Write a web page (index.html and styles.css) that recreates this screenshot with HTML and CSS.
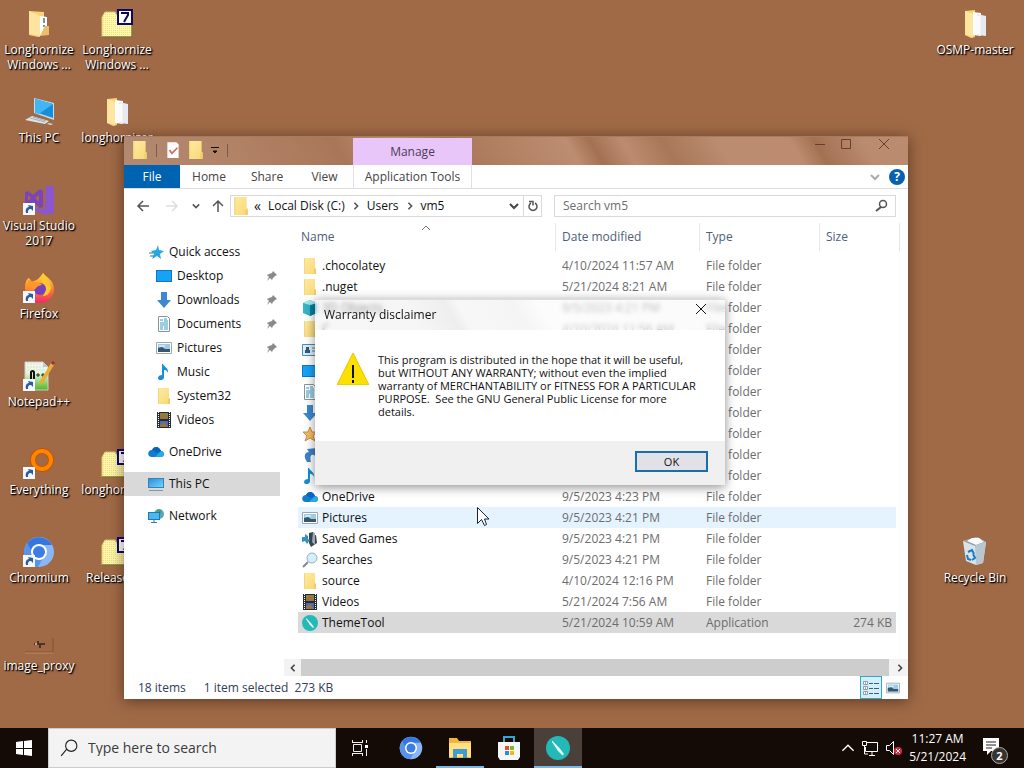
FILE: index.html
```html
<!DOCTYPE html>
<html lang="en">
<head>
<meta charset="utf-8">
<meta name="viewport" content="width=device-width, initial-scale=1">
<title>Desktop</title>
<link rel="stylesheet" href="styles.css">
</head>
<body>
<svg class="defs" aria-hidden="true">
  <defs>
    <linearGradient id="g-folder" x1="0" x2="1" y2="1"><stop offset="0" stop-color="#ffeaa0"/><stop offset="1" stop-color="#f7d873"/></linearGradient>
    <linearGradient id="g-blue" x1="0" x2="1" y2="1"><stop offset="0" stop-color="#2d8fdd"/><stop offset="1" stop-color="#6fd3ff"/></linearGradient>
    <linearGradient id="g-fire" x1="0" x2="0" y2="1"><stop offset="0" stop-color="#ffe040"/><stop offset=".5" stop-color="#ff8a2a"/><stop offset="1" stop-color="#f0286a"/></linearGradient>
    <linearGradient id="g-green" x1="0" x2="0" y2="1"><stop offset="0" stop-color="#f4fbef"/><stop offset=".4" stop-color="#e4f5d9"/><stop offset="1" stop-color="#4cb81f"/></linearGradient>
    <pattern id="p-zip" width="2" height="2" patternUnits="userSpaceOnUse"><rect width="2" height="2" fill="#fdf8ae"/><path d="M0 0h1v1H0z" fill="#efe07c"/></pattern>
  </defs>
  <symbol id="folder" viewBox="0 0 16 16"><path d="M2 0h11v10h1v6H2z" fill="url(#g-folder)"/><path d="M12 11h2v5h-2z" fill="#efcc66"/><path d="M2 0h1v16H2z" fill="#f2d681"/></symbol>
  <symbol id="open-folder" viewBox="0 0 32 32"><path d="M6 3l10-1v27l-4 1-6-3z" fill="#f7d375"/><path d="M14 4l8 1v23l-8-1z" fill="#fff"/><path d="M18 6l9 2v20l-9-1z" fill="#e7eaf3"/><path d="M6 3l8 3v24l-2-2-6-1z" fill="#ffe6a0"/><path d="M17 8v18M20 8v18" stroke="#fbfbfd" stroke-width="3"/></symbol>
  <symbol id="doc-folder" viewBox="0 0 32 32"><path d="M6 3l15 1v22l-6 3-9-2z" fill="#f7d375"/><path d="M17 8l7 1v17l-7 1z" fill="#fff"/><path d="M21 10v5M21 17v2M21 21v3" stroke="#7895b0" stroke-width="2"/><path d="M6 3l11 5v21l-3-2-8-1z" fill="#ffe3a0"/><path d="M22 18h4v9l-9 1z" fill="#eebd67"/></symbol>
  <symbol id="zip" viewBox="0 0 32 32"><path d="M1 9l3-5h10l3 5h14v20H1z" fill="url(#p-zip)" stroke="#d3c76c"/><path d="M1 29h30V12" fill="none" stroke="#55501e"/><path d="M17 2h14v14H17z" fill="#fff" stroke="#0b086a" stroke-width="2"/><path d="M20 5h7v2l-4 7" fill="none" stroke="#080858" stroke-width="2"/></symbol>
  <symbol id="pc" viewBox="0 0 32 32"><path d="M11 2l20 5v17L11 17z" fill="#c7dce8"/><path d="M12 3l18 5v14l-18-6z" fill="#168ddb"/><path d="M12 3l18 5-14 10-4-1z" fill="#42b6f5"/><path d="M9 20l17 5-4 3-20-4z" fill="#dbe3e6"/><path d="M7 22l15 4M10 21l13 4" stroke="#a3b1b9"/><path d="M26 27l4 1-2 1-4-1z" fill="#ddd"/></symbol>
  <symbol id="shortcut" viewBox="0 0 12 12"><path d="M0 0h12v12H0z" fill="#f6f8fc"/><path d="M3 10C2 6 4 4 6 4L5 2l5 1v5L8 6C5 6 5 8 5 10z" fill="#2b5c9f"/></symbol>
  <symbol id="vs" viewBox="0 0 32 32"><path d="M23 1l8 2v26l-8 2-11-4v-3l10 1z" fill="#8b56cf"/><path d="M2 8l3-1 5 4 7-6 3 2v16l-3 1-7-6-5 4-3-1zM5 11v6l3-3zm11 0l-4 3 4 4z" fill="#7c43bc" fill-rule="evenodd"/><use href="#shortcut" x="0" y="19" width="12" height="12"/></symbol>
  <symbol id="firefox" viewBox="0 0 32 32"><path d="M20 1c3 4 11 7 11 16 0 8-6 14-14 14S2 25 2 17C2 12 3 7 6 6l3 4c3-2 4-1 6-3s4-4 5-6z" fill="url(#g-fire)"/><path d="M19 1c2 4 8 6 9 15-2 8-6 8-8 8 4-6 2-10-1-13z" fill="#ffc630"/><circle cx="17" cy="17" r="6" fill="#7540bd"/><path d="M5 8l7 2c4 0 6 1 7 3-6 1-6 4-8 5-5 0-6-5-6-10z" fill="#ff9629"/><use href="#shortcut" x="0" y="19" width="12" height="12"/></symbol>
  <symbol id="notepad" viewBox="0 0 32 32"><path d="M2 2h18l5 5v23H2z" fill="url(#g-green)" stroke="#ccc"/><path d="M4 4h15M4 7h18M4 10h18" stroke="#dcdcdc" stroke-dasharray="2 1"/><path d="M20 2l5 5h-5z" fill="#bac9d5"/><path d="M8 20v-8q2-2 3 0v8" fill="none" stroke="#111" stroke-width="2"/><path d="M13 15h4m1 0h4M15 13v4m5-4v4" stroke="#222"/><path d="M28 3l3 2-11 18-3 2v-4z" fill="#e8ae36"/><path d="M28 3l2-2 2 2-2 2z" fill="#a32b34"/><use href="#shortcut" x="0" y="19" width="12" height="12"/></symbol>
  <symbol id="everything" viewBox="0 0 32 32"><path d="M12 20l-4 4" stroke="#da6500" stroke-width="4"/><circle cx="19" cy="12" r="9" fill="none" stroke="#c85400" stroke-width="6"/><circle cx="19" cy="12" r="9" fill="none" stroke="#ff8500" stroke-width="4"/><use href="#shortcut" x="0" y="19" width="12" height="12"/></symbol>
  <symbol id="chromium" viewBox="0 0 32 32"><circle cx="16" cy="16" r="15" fill="#8bb5f5"/><path d="M4 7A15 15 0 0129 9H16c-4 0-7 3-8 6z" fill="#3478df"/><path d="M4 7A15 15 0 0015 31l5-9c-5 2-9-1-11-6z" fill="#5792ef"/><circle cx="16" cy="16" r="8" fill="#fff"/><circle cx="16" cy="16" r="6" fill="#3d7ce5"/></symbol>
  <symbol id="chromium-link" viewBox="0 0 32 32"><use href="#chromium"/><use href="#shortcut" x="0" y="19" width="12" height="12"/></symbol>
  <symbol id="proxy" viewBox="0 0 32 32"><path d="M2 28h28V14" fill="none" stroke="#805338"/><path d="M2 29h28" stroke="#b9855f"/><path d="M11 20h11M15 17v3m2-1v5" stroke="#4a3529" stroke-width="2"/><path d="M12 19h2v2h-2z" fill="#c6a183"/></symbol>
  <symbol id="bin" viewBox="0 0 32 32"><path d="M4 5l14-4 9 5-3 21-7 2-10-4z" fill="#d9e3e8"/><path d="M4 5l12 5 11-4-9-5z" fill="#909fa9"/><path d="M8 5l5-3 7 0 5 4-8 3z" fill="#f7fafb"/><path d="M16 10l11-4-3 21-7 2z" fill="#b7c6d0"/><path d="M9 16l4-2 2 4M8 19l1 4 3 1m2-6l2 4-3 2" fill="none" stroke="#147cc9" stroke-width="2"/></symbol>
  <symbol id="star" viewBox="0 0 16 16"><path d="M9 1l1 5 5 1-4 3 1 5-4-3-5 3 2-5-3-3 5-1z" fill="#29a7e1"/><path d="M0 9h4M1 12h4" stroke="#2278b4"/></symbol>
  <symbol id="desktop" viewBox="0 0 16 16"><path d="M0 2h16v12H0z" fill="#087ac9"/><path d="M1 3h14v10H1z" fill="#18a2f5"/></symbol>
  <symbol id="down" viewBox="0 0 16 16"><path d="M5 0h6v8h4l-7 8-7-8h4z" fill="#3c89d0"/></symbol>
  <symbol id="document" viewBox="0 0 16 16"><path d="M2.500.500h9l2 2v13h-11z" fill="#fff" stroke="#879699"/><path d="M4 4h3M4 7h8M4 9h8M4 11h3m1 0h4M4 13h3m1 0h4M8 3h3M8 5h4" stroke="#379bc5"/></symbol>
  <symbol id="picture" viewBox="0 0 16 16"><path d="M.500 2.500h15v11H.500z" fill="#fff" stroke="#9aa8b1"/><path d="M2 4h12v8H2z" fill="#9bcbe5"/><path d="M2 8l4-1 3 2h5v3H2z" fill="#37566e"/><path d="M3 6h6" stroke="#fff"/></symbol>
  <symbol id="music" viewBox="0 0 16 16"><path d="M7 0c1 3 6 4 5 9-1-3-3-3-4-3v7c0 4-6 4-6 1 0-2 2-3 4-3V0z" fill="#188fd4"/></symbol>
  <symbol id="video" viewBox="0 0 16 16"><path d="M1 0h14v16H1z" fill="#252b34"/><path d="M4 1h8v6H4z" fill="#8a813b"/><path d="M4 9h8v6H4z" fill="#446eb7"/><path d="M4 5l4-3 4 5H4zm0 8l4-3 4 5H4z" fill="#a0723b"/><path d="M2.500 0v16m11-16v16" stroke="#fff" stroke-dasharray="1 1"/></symbol>
  <symbol id="cloud" viewBox="0 0 16 16"><path d="M1 12c-2-3 0-6 3-6 2-4 7-4 9 1 4 0 4 6 0 6H3z" fill="#137bd0"/><path d="M4 6c2-4 7-4 9 1L9 9z" fill="#0866b9"/><path d="M7 13l6-6c4 0 4 6 0 6z" fill="#29a9e8"/></symbol>
  <symbol id="monitor" viewBox="0 0 16 16"><path d="M0 2h16v10H0z" fill="#3c81a8"/><path d="M1 3h14v8H1z" fill="url(#g-blue)"/><path d="M1 14.500h14" stroke="#789cae"/></symbol>
  <symbol id="network" viewBox="0 0 16 16"><circle cx="11" cy="6" r="5" fill="#5aa7b2"/><path d="M9 2c3-1 5 1 4 3l-3 1z" fill="#48a068"/><path d="M0 4h12v8H0z" fill="#2278aa"/><path d="M1 5h10v6H1z" fill="#48b8f0"/><path d="M3 14.500h6M6 12v2" stroke="#347da3"/></symbol>
  <symbol id="cube" viewBox="0 0 16 16"><path d="M1 3l7-3 7 3v10l-7 3-7-3z" fill="#35b5c5"/><path d="M8 5l7-2v10l-7 3z" fill="#087f9d"/><path d="M1 3l7-3 7 3-7 2z" fill="#a0ebef"/></symbol>
  <symbol id="contact" viewBox="0 0 16 16"><path d="M.500 2.500h15v11H.500z" fill="#d9eef8" stroke="#4e8dac"/><path d="M4 5h3v3h1v3H3V8h1z" fill="#325a73"/><path d="M10 6h4m-4 3h4" stroke="#4384a9"/></symbol>
  <symbol id="favorite" viewBox="0 0 16 16"><path d="M8 1l2 5h5l-4 4 2 5-5-3-5 3 2-5-4-4h5z" fill="#f3bc66" stroke="#cb8c42"/></symbol>
  <symbol id="link" viewBox="0 0 16 16"><path d="M5 15C1 9 3 5 7 5L5 2l10-1v10l-3-3c-4-1-4 3-3 7z" fill="#3d83cb"/></symbol>
  <symbol id="games" viewBox="0 0 16 16"><path d="M7 2l4-1v4l3-1 1 8-6 4-2-4z" fill="#39454d"/><path d="M11 1l2 1v12l-3-3z" fill="#9ba9b2"/><path d="M0 6h3V3l3 2v3l2 1-3 4-2-3-3 1z" fill="#3a8fc2"/></symbol>
  <symbol id="search-folder" viewBox="0 0 16 16"><path d="M6 10l-5 5" stroke="#758d9b" stroke-width="2"/><circle cx="10" cy="6" r="5" fill="#d4effc" stroke="#9aafba"/></symbol>
  <symbol id="tool" viewBox="0 0 16 16"><circle cx="8" cy="8" r="8" fill="#23b9b7"/><path d="M4 3l5 5 3 4-1 1-3-3-4-6z" fill="#e8ffff"/></symbol>
  <symbol id="pin" viewBox="0 0 12 12"><path d="M7 1l4 4-2 1-2 2-1 2-2-2-3 3 2-4-2-2 2-1 3-1z" fill="#858b8e"/></symbol>
  <symbol id="mag" viewBox="0 0 16 16"><circle cx="10" cy="6" r="3.500" fill="none" stroke="currentColor" stroke-width="1.500"/><path d="M8 9l-5 4" stroke="currentColor" stroke-width="2"/></symbol>
  <symbol id="mag-thin" viewBox="0 0 16 16"><circle cx="10" cy="6" r="5" fill="none" stroke="currentColor"/><path d="M6 9l-5 6" stroke="currentColor"/></symbol>
  <symbol id="chev-d" viewBox="0 0 10 10"><path d="M1 3l4 4 4-4" fill="none" stroke="currentColor" stroke-width="2"/></symbol>
  <symbol id="chev-r" viewBox="0 0 10 10"><path d="M3 1l4 4-4 4" fill="none" stroke="currentColor" stroke-width="2"/></symbol>
  <symbol id="chev-l" viewBox="0 0 10 10"><path d="M7 1L3 5l4 4" fill="none" stroke="currentColor" stroke-width="2"/></symbol>
  <symbol id="chev-u" viewBox="0 0 10 10"><path d="M1 7l4-4 4 4" fill="none" stroke="currentColor"/></symbol>
  <symbol id="arrow-l" viewBox="0 0 14 14"><path d="M13 7H2m5-5L2 7l5 5" fill="none" stroke="currentColor" stroke-width="1.500"/></symbol>
  <symbol id="close" viewBox="0 0 12 12"><path d="M1 1l10 10M11 1L1 11" stroke="currentColor"/></symbol>
</svg>

<main class="desktop">
  <nav class="icons" aria-label="Desktop icons">
    <a class="shortcut c1 r1" href="#"><svg><use href="#doc-folder"/></svg><span>Longhornize Windows ...</span></a>
    <a class="shortcut c2 r1" href="#"><svg><use href="#zip"/></svg><span>Longhornize Windows ...</span></a>
    <a class="shortcut c4 r1" href="#"><svg><use href="#open-folder"/></svg><span>OSMP-master</span></a>
    <a class="shortcut c1 r2" href="#"><svg><use href="#pc"/></svg><span>This PC</span></a>
    <a class="shortcut c2 r2" href="#"><svg><use href="#open-folder"/></svg><span>longhornizer</span></a>
    <a class="shortcut c1 r3" href="#"><svg><use href="#vs"/></svg><span>Visual Studio 2017</span></a>
    <a class="shortcut c1 r4" href="#"><svg><use href="#firefox"/></svg><span>Firefox</span></a>
    <a class="shortcut c1 r5" href="#"><svg><use href="#notepad"/></svg><span>Notepad++</span></a>
    <a class="shortcut c1 r6" href="#"><svg><use href="#everything"/></svg><span>Everything</span></a>
    <a class="shortcut c2 r6" href="#"><svg><use href="#zip"/></svg><span>longhornizer</span></a>
    <a class="shortcut c1 r7" href="#"><svg><use href="#chromium-link"/></svg><span>Chromium</span></a>
    <a class="shortcut c2 r7" href="#"><svg><use href="#zip"/></svg><span>Release_10</span></a>
    <a class="shortcut c4 r7" href="#"><svg><use href="#bin"/></svg><span>Recycle Bin</span></a>
    <a class="shortcut c1 r8" href="#"><svg><use href="#proxy"/></svg><span>image_proxy</span></a>
  </nav>

  <section class="explorer" aria-label="vm5">
    <header class="titlebar">
      <div class="quick">
        <svg class="i18"><use href="#folder"/></svg><i class="bar"></i>
        <button aria-label="Properties"><svg class="i18" viewBox="0 0 16 16"><path d="M3 1h8l2 2v12H3z" fill="#fff"/><path d="M5 8l2 3 5-5" fill="none" stroke="#d8675c" stroke-width="1.500"/></svg></button>
        <button aria-label="New folder"><svg class="i18"><use href="#folder"/></svg></button>
        <button aria-label="Customize"><svg class="i10" viewBox="0 0 10 10"><path d="M1 2.500h8M3 6h4L5 8z" fill="#111" stroke="#111"/></svg></button><i class="bar"></i>
      </div>
      <div class="manage">Manage</div>
      <div class="controls">
        <button aria-label="Minimize"><svg viewBox="0 0 12 12"><path d="M1 6.500h10" stroke="currentColor"/></svg></button>
        <button aria-label="Maximize"><svg viewBox="0 0 12 12"><path d="M1.500 1.500h9v9h-9z" fill="none" stroke="currentColor"/></svg></button>
        <button class="x" aria-label="Close"><svg><use href="#close"/></svg></button>
      </div>
    </header>
    <div class="ribbon">
      <button class="file">File</button><button class="tab">Home</button><button class="tab">Share</button><button class="tab view">View</button><button class="tools">Application Tools</button>
      <div class="help"><button aria-label="Expand ribbon"><svg class="i10"><use href="#chev-d"/></svg></button><button class="question" aria-label="Help">?</button></div>
    </div>
    <div class="address">
      <div class="arrows">
        <button aria-label="Back"><svg class="i14"><use href="#arrow-l"/></svg></button>
        <button class="dim" aria-label="Forward"><svg class="i14 flip"><use href="#arrow-l"/></svg></button>
        <button aria-label="Recent"><svg class="i8"><use href="#chev-d"/></svg></button>
        <button aria-label="Up"><svg class="i14 up"><use href="#arrow-l"/></svg></button>
      </div>
      <div class="path">
        <svg class="i18"><use href="#folder"/></svg><span class="root">«</span><a href="#">Local Disk (C:)</a><svg class="i8"><use href="#chev-r"/></svg><a href="#">Users</a><svg class="i8"><use href="#chev-r"/></svg><a href="#">vm5</a>
        <button class="drop" aria-label="Locations"><svg class="i10"><use href="#chev-d"/></svg></button>
        <button class="refresh" aria-label="Refresh"><svg class="i14" viewBox="0 0 14 14"><path d="M9 4a4 4 0 11-4 0M3 2.500h4v4" fill="none" stroke="#555" stroke-width="1.500"/></svg></button>
      </div>
      <label class="search"><input type="text" placeholder="Search vm5" aria-label="Search vm5"><svg class="i16"><use href="#mag"/></svg></label>
    </div>
    <div class="content">
      <nav class="side">
        <a class="top" href="#"><svg><use href="#star"/></svg>Quick access</a>
        <a href="#"><svg><use href="#desktop"/></svg>Desktop<svg class="pin"><use href="#pin"/></svg></a>
        <a href="#"><svg><use href="#down"/></svg>Downloads<svg class="pin"><use href="#pin"/></svg></a>
        <a href="#"><svg><use href="#document"/></svg>Documents<svg class="pin"><use href="#pin"/></svg></a>
        <a href="#"><svg><use href="#picture"/></svg>Pictures<svg class="pin"><use href="#pin"/></svg></a>
        <a href="#"><svg><use href="#music"/></svg>Music</a>
        <a href="#"><svg><use href="#folder"/></svg>System32</a>
        <a href="#"><svg><use href="#video"/></svg>Videos</a>
        <a class="top group" href="#"><svg><use href="#cloud"/></svg>OneDrive</a>
        <a class="top group current" href="#"><svg><use href="#monitor"/></svg>This PC</a>
        <a class="top group" href="#"><svg><use href="#network"/></svg>Network</a>
      </nav>
      <div class="files">
        <table>
          <colgroup><col><col class="w-date"><col class="w-type"><col class="w-size"></colgroup>
          <thead><tr><th>Name<svg class="sort"><use href="#chev-u"/></svg></th><th>Date modified</th><th>Type</th><th>Size</th></tr></thead>
          <tbody>
            <tr><td><svg><use href="#folder"/></svg>.chocolatey</td><td>4/10/2024 11:57 AM</td><td>File folder</td><td></td></tr>
            <tr><td><svg><use href="#folder"/></svg>.nuget</td><td>5/21/2024 8:21 AM</td><td>File folder</td><td></td></tr>
            <tr><td><svg><use href="#cube"/></svg>3D Objects</td><td>9/5/2023 4:21 PM</td><td>File folder</td><td></td></tr>
            <tr><td><svg><use href="#folder"/></svg>C</td><td>4/10/2024 11:56 AM</td><td>File folder</td><td></td></tr>
            <tr><td><svg><use href="#contact"/></svg></td><td></td><td>File folder</td><td></td></tr>
            <tr><td><svg><use href="#desktop"/></svg></td><td></td><td>File folder</td><td></td></tr>
            <tr><td><svg><use href="#document"/></svg></td><td></td><td>File folder</td><td></td></tr>
            <tr><td><svg><use href="#down"/></svg></td><td></td><td>File folder</td><td></td></tr>
            <tr><td><svg><use href="#favorite"/></svg></td><td></td><td>File folder</td><td></td></tr>
            <tr><td><svg><use href="#link"/></svg></td><td></td><td>File folder</td><td></td></tr>
            <tr><td><svg><use href="#music"/></svg></td><td></td><td>File folder</td><td></td></tr>
            <tr><td><svg><use href="#cloud"/></svg>OneDrive</td><td>9/5/2023 4:23 PM</td><td>File folder</td><td></td></tr>
            <tr class="hover"><td><svg><use href="#picture"/></svg>Pictures</td><td>9/5/2023 4:21 PM</td><td>File folder</td><td></td></tr>
            <tr><td><svg><use href="#games"/></svg>Saved Games</td><td>9/5/2023 4:21 PM</td><td>File folder</td><td></td></tr>
            <tr><td><svg><use href="#search-folder"/></svg>Searches</td><td>9/5/2023 4:21 PM</td><td>File folder</td><td></td></tr>
            <tr><td><svg><use href="#folder"/></svg>source</td><td>4/10/2024 12:16 PM</td><td>File folder</td><td></td></tr>
            <tr><td><svg><use href="#video"/></svg>Videos</td><td>5/21/2024 7:56 AM</td><td>File folder</td><td></td></tr>
            <tr class="selected"><td><svg><use href="#tool"/></svg>ThemeTool</td><td>5/21/2024 10:59 AM</td><td>Application</td><td>274 KB</td></tr>
          </tbody>
        </table>
        <div class="scroll"><button aria-label="Scroll left"><svg class="i8"><use href="#chev-l"/></svg></button><div class="thumb"></div><button aria-label="Scroll right"><svg class="i8 flip"><use href="#chev-l"/></svg></button></div>
      </div>
    </div>
    <footer class="status">
      <span class="count">18 items</span><span>1 item selected&nbsp; 273 KB</span>
      <div class="views">
        <button class="on" aria-label="Details"><svg viewBox="0 0 16 16"><path d="M.500 1.500h4v3h-4zM.500 6.500h4v3h-4zM.500 11.500h4v3h-4z" fill="#fff" stroke="#959bb0"/><path d="M6 3.500h4m1 0h5M6 8.500h4m1 0h5M6 13.500h4m1 0h5M2 3h1M2 8h1m-1 5h1" stroke="#4d5971"/></svg></button>
        <button aria-label="Large icons"><svg><use href="#picture"/></svg></button>
      </div>
    </footer>
  </section>

  <section class="dialog" role="dialog" aria-labelledby="dlg-title">
    <header><h1 id="dlg-title">Warranty disclaimer</h1><button aria-label="Close"><svg class="i12"><use href="#close"/></svg></button></header>
    <div class="message">
      <svg class="warn" viewBox="0 0 32 32"><path d="M16 0l16 32H0z" fill="#fce100" stroke="#e9c000" stroke-linejoin="round"/><path d="M16 12v13m0 2v3" stroke="#111" stroke-width="2"/></svg>
      <p>This program is distributed in the hope that it will be useful,<br>but WITHOUT ANY WARRANTY; without even the implied<br>warranty of MERCHANTABILITY or FITNESS FOR A PARTICULAR<br>PURPOSE.&nbsp; See the GNU General Public License for more<br>details.</p>
    </div>
    <footer><button class="ok">OK</button></footer>
  </section>
  <svg class="cursor" viewBox="0 0 12 20" aria-hidden="true"><path d="M.500.500v16l4-4 3 6 2-1-2-5.500h4.500z" fill="#fff" stroke="#17243c"/></svg>
</main>

<footer class="taskbar">
  <button class="start" aria-label="Start"><svg class="i16" viewBox="0 0 16 16"><path d="M0 2l7-1v7H0zM8 1l8-1v8H8zM0 9h7v6l-7-1zM8 9h8v7l-8-1z" fill="#fff"/></svg></button>
  <label class="tasksearch"><svg class="i18"><use href="#mag-thin"/></svg><input type="text" placeholder="Type here to search" aria-label="Type here to search"></label>
  <button aria-label="Task View"><svg class="i18" viewBox="0 0 18 18"><path d="M1.500 1v3m10-3v3M1.500 17v-3m10 3v-3M1 3.500h11M1 14.500h11M2.500 5.500h8v7h-8zM15.500 1v3m0 6v7" fill="none" stroke="#eee"/><path d="M14 6h3v3h-3z" fill="#fff"/></svg></button>
  <div class="apps">
    <button class="app" aria-label="Chromium"><svg class="i24"><use href="#chromium"/></svg></button>
    <button class="app open" aria-label="File Explorer"><svg class="i24" viewBox="0 0 24 24"><path d="M1 2h8l2 3h12v17H1z" fill="#f1b73c"/><path d="M1 7h22v14H1z" fill="#ffe083"/><path d="M5 13h14v9h-4v-4H9v4H5z" fill="#429bd0"/></svg></button>
    <button class="app" aria-label="Store"><svg class="i24" viewBox="0 0 24 24"><path d="M7 7V1h10v6" fill="none" stroke="#31a7d7" stroke-width="2"/><path d="M1 6h22v15l-2 3H3l-2-3z" fill="#f5f5f5"/><path d="M8 10h4v4H8z" fill="#e94b2a"/><path d="M13 10h4v4h-4z" fill="#7eb62d"/><path d="M8 15h4v4H8z" fill="#2293d7"/><path d="M13 15h4v4h-4z" fill="#f5b51b"/></svg></button>
    <button class="app active" aria-label="ThemeTool"><svg class="i24"><use href="#tool"/></svg></button>
  </div>
  <div class="tray">
    <button aria-label="Hidden icons"><svg class="i14"><use href="#chev-u"/></svg></button>
    <button aria-label="Network"><svg class="i18" viewBox="0 0 18 18"><path d="M6 3.500h10.500v9H4.500V8M8 16.500h6m-3-4v4M1.500 2.500h4v4h-4zM3.500 7v8H7" fill="none" stroke="#fff"/></svg></button>
    <button aria-label="Sound muted"><svg class="i18" viewBox="0 0 18 18"><path d="M1.500 6.500h3l4-4v13l-4-4h-3z" fill="none" stroke="#fff"/><circle cx="13" cy="12" r="4" fill="#d82c42"/><path d="M11 10l4 4m0-4l-4 4" stroke="#fff"/></svg></button>
    <time><span>11:27 AM</span><span>5/21/2024</span></time>
    <button class="notes" aria-label="2 notifications"><svg viewBox="0 0 26 26"><path d="M1 3h16v13H9l-4 4v-4H1z" fill="#fff"/><path d="M4 7h10M4 10h10M4 13h6" stroke="#222"/></svg><b>2</b></button>
  </div>
</footer>
</body>
</html>
```
FILE: styles.css
```css
* { box-sizing: border-box; }
body { margin: 0; height: 100vh; display: flex; flex-direction: column; overflow: hidden; background: #a06a46; font: 12px/16px "Open Sans", "Noto Sans", sans-serif; color: #111; }
button { border: 0; padding: 0; background: none; font: inherit; color: inherit; display: flex; align-items: center; justify-content: center; }
a { color: inherit; text-decoration: none; }
input { border: 0; padding: 0; background: none; outline: 0; font: inherit; color: inherit; flex: 1; min-width: 0; }
svg { flex: none; display: block; }
.defs { position: absolute; width: 0; height: 0; }
.i8 { width: 8px; height: 8px; }
.i10 { width: 10px; height: 10px; }
.i12 { width: 12px; height: 12px; }
.i14 { width: 14px; height: 14px; }
.i16 { width: 16px; height: 16px; }
.i18 { width: 18px; height: 18px; }
.i24 { width: 24px; height: 24px; }
.flip { transform: rotate(180deg); }
.up { transform: rotate(90deg); }

.desktop { flex: 1; min-height: 0; position: relative; }
.icons { display: grid; grid-template-columns: 78px 78px 1fr 98px; grid-auto-rows: 88px; padding-top: 8px; }
.shortcut { display: flex; flex-direction: column; align-items: center; gap: 2px; color: #fff; text-align: center; line-height: 15px; text-shadow: 1px 1px 2px #000, 1px 1px 1px #000; }
.shortcut svg { width: 32px; height: 32px; }
.c1 { grid-column: 1; } .c2 { grid-column: 2; } .c4 { grid-column: 4; }
.r1 { grid-row: 1; } .r2 { grid-row: 2; } .r3 { grid-row: 3; } .r4 { grid-row: 4; }
.r5 { grid-row: 5; } .r6 { grid-row: 6; } .r7 { grid-row: 7; } .r8 { grid-row: 8; }

.explorer { position: absolute; left: 124px; right: 116px; top: 136px; bottom: 29px; display: flex; flex-direction: column; box-shadow: 0 2px 14px rgba(30,10,0,.5); }
.titlebar { height: 29px; display: flex; backdrop-filter: blur(3px); background: linear-gradient(60deg, #b58e78dd 0, #b38468ee 15%, #a97659 28%, #b58467 32%, #bb8b6f 36%, #a87558 42%, #b48366 50%, #bd8d71 57%, #a37152 60%, #bd8c70 64%, #a87759 69%, #bc8c70 76%, #bd8c70 85%, #a37152 88%, #bb8b70 94%); border-top: 1px solid #a77b60; }
.quick { width: 229px; display: flex; align-items: center; gap: 5px; padding: 0 0 2px 7px; }
.quick .bar { width: 1px; height: 13px; margin: 0 2px; background: #805b4a; }
.manage { width: 119px; margin-top: 1px; background: #e8c6fa; display: flex; align-items: center; justify-content: center; color: #4c3c57; }
.controls { margin-left: auto; display: flex; padding: 1px 11px 0 0; align-items: flex-start; color: #66402c; }
.controls button { width: 26px; }
.controls .x { margin-left: 12px; }
.controls svg { width: 12px; height: 12px; }
.ribbon { height: 24px; display: flex; background: #fff; border-bottom: 1px solid #ddd; color: #444; }
.file { width: 56px; background: #0063b1; color: #fff; }
.tab { width: 58px; }
.tab.view { width: 57px; }
.tools { width: 119px; border: solid #e5dde8; border-width: 0 1px; }
.help { margin-left: auto; display: flex; gap: 9px; align-items: center; padding-right: 3px; color: #aaa; }
.question { width: 16px; height: 16px; border-radius: 50%; background: #0861b0; color: #fff; font-weight: bold; }
.address { height: 34px; display: flex; align-items: center; background: #fff; padding-right: 12px; color: #555; }
.arrows { width: 106px; display: flex; align-items: center; padding: 0 6px 0 12px; gap: 15px; flex: none; }
.arrows button:nth-child(3) { margin: 0 -4px 0 -2px; }
.dim { color: #ddd; }
.path { flex: 309 0 0; height: 22px; border: 1px solid #d9d9d9; display: flex; align-items: center; color: #111; padding-left: 1px; min-width: 0; }
.path a { margin: 0 7px; white-space: nowrap; }
.path .root { margin-left: 4px; font-size: 14px; }
.path > svg { color: #555; }
.drop { margin-left: auto; width: 18px; color: #444; }
.refresh { width: 18px; height: 100%; border-left: 1px solid #d9d9d9; }
.search { flex: 326 0 0; height: 22px; margin-left: 12px; border: 1px solid #d9d9d9; display: flex; align-items: center; padding: 0 6px 0 8px; min-width: 0; }
.search input::placeholder { color: #6d6d6d; opacity: 1; }
.content { flex: 1; min-height: 0; display: flex; background: #fff; }
.side { width: 156px; padding-top: 17px; flex: none; }
.side a { height: 24px; display: flex; align-items: center; padding-left: 32px; gap: 5px; }
.side a.top { padding-left: 24px; }
.side a.top:first-child { padding-left: 25px; gap: 4px; }
.side svg { width: 16px; height: 16px; }
.side .pin { width: 12px; height: 12px; margin-left: auto; margin-right: 2px; }
.side .group { margin-top: 8px; }
.side .current { background: #d9d9d9; }
.files { flex: 1; min-width: 0; display: flex; flex-direction: column; padding-left: 4px; }
table { table-layout: fixed; border-collapse: separate; border-spacing: 0; margin: 0 8px 0 14px; }
.w-date { width: 144px; } .w-type { width: 120px; } .w-size { width: 80px; }
th { height: 28px; padding: 0 6px; font-weight: normal; text-align: left; color: #4c607a; border-right: 1px solid #e8e8e8; position: relative; }
th:first-child { padding-left: 3px; }
thead::after { content: ""; display: block; height: 4px; }
.sort { position: absolute; width: 10px; height: 10px; left: 48%; top: 0; color: #777; }
td { height: 21px; padding: 0 0 0 6px; color: #6d6d6d; white-space: nowrap; line-height: 16px; }
td:first-child { color: #111; padding-left: 4px; }
td svg { display: inline-block; width: 16px; height: 16px; margin-right: 4px; vertical-align: top; }
td:last-child { text-align: right; padding-right: 4px; border-right: 4px solid transparent; background-clip: padding-box; }
.hover td { background-color: #e5f3ff; }
.selected td { background-color: #d9d9d9; }
.scroll { margin-top: auto; height: 17px; display: flex; background: #f3f3f3; color: #444; }
.scroll button { width: 17px; }
.thumb { flex: 1; background: #cdcdcd; margin-right: 2px; }
.status { height: 23px; display: flex; align-items: center; background: #fff; padding-left: 14px; color: #304057; }
.count { margin-right: 18px; }
.views { margin-left: auto; display: flex; padding-right: 4px; align-self: stretch; }
.views button { width: 22px; }
.views .on { border: 1px solid #36a6c2; background: #cfeffa; }
.views svg { width: 16px; height: 16px; }
.views button:last-child svg { width: 14px; height: 14px; }

.dialog { position: absolute; left: 315px; right: 299px; top: 299px; display: flex; flex-direction: column; box-shadow: 0 2px 10px rgba(0,0,0,.45); }
.dialog header { height: 31px; display: flex; align-items: center; justify-content: space-between; padding: 0 18px 0 9px; background: linear-gradient(60deg, #f2f2f299 0, #efefef99 25%, #e6e6e6aa 34%, #f2f2f299 37%, #eeeeee99 50%, #fafafa99 56%, #f8f8f899 100%); backdrop-filter: blur(2px); border-top: 1px solid #ddd; }
.dialog h1 { margin: 0; font: inherit; }
.dialog header button { align-self: flex-start; padding-top: 3px; }
.message { background: #fff; display: flex; gap: 9px; padding: 23px 22px; min-height: 111px; font-size: 11px; line-height: 13px; }
.message p { margin: 0; white-space: nowrap; }
.warn { width: 32px; height: 32px; }
.dialog > footer { height: 44px; background: #f0f0f0; display: flex; align-items: center; justify-content: flex-end; padding: 0 17px 3px; }
.ok { width: 73px; height: 21px; border: 2px solid #176fae; background: #e1e1e7; font-size: 11px; }
.cursor { position: absolute; left: 477px; top: 507px; width: 12px; height: 20px; }

.taskbar { height: 40px; display: flex; background: #150b06; color: #fff; }
.start { width: 48px; }
.tasksearch { width: 288px; background: #f3f3f3; border: 1px solid #ccc; display: flex; align-items: center; gap: 10px; padding: 0 11px; color: #222; font-size: 14px; }
.tasksearch input::placeholder { color: #3c3c3c; opacity: 1; }
.taskbar > button:not(.start) { width: 48px; }
.apps { display: flex; gap: 1px; padding-left: 3px; }
.app { width: 48px; border: solid transparent; border-width: 2px 0; }
.app.open { border-bottom-color: #76b9ed; }
.app.active { background: #4a3f39; border-color: #4a3f39; border-bottom-color: #76b9ed; }
.tray { margin-left: auto; display: flex; align-items: center; gap: 6px; padding-right: 16px; }
.tray time { display: flex; flex-direction: column; text-align: center; line-height: 18px; }
.notes { position: relative; margin-left: 10px; }
.notes svg { width: 26px; height: 26px; }
.notes b { position: absolute; right: 0; bottom: -3px; width: 17px; height: 17px; border-radius: 50%; border: 1px solid #aaa; background: #38332f; font-size: 11px; line-height: 15px; }
```
